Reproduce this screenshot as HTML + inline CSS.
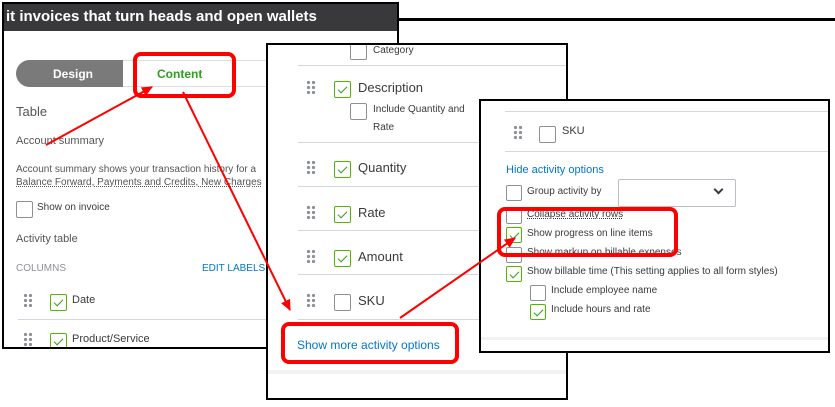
<!DOCTYPE html>
<html><head><style>
*{margin:0;padding:0;box-sizing:border-box}
body{width:835px;height:407px;background:#fff;position:relative;overflow:hidden;font-family:"Liberation Sans",sans-serif;color:#393a3d}
.abs{position:absolute}
.p{position:absolute;background:#fff;border:2px solid #000;overflow:hidden}
.t{position:absolute;white-space:nowrap}
.cb{position:absolute;width:17px;height:17px;border:1px solid #8d9096;border-radius:2px;background:#fff}
.cb.on{border-color:#53b700}
.cb.on::after{content:"";position:absolute;left:5px;top:2px;width:4px;height:8px;border:solid #2ca01c;border-width:0 1.5px 1.5px 0;transform:rotate(45deg)}
.dr{position:absolute;width:10px;height:14px;background:radial-gradient(circle,#8d9096 1.6px,transparent 1.8px) 0 0/5px 5px}
.sep{position:absolute;height:1px;background:#d4d7dc}
.red{position:absolute;border:4px solid #f00;border-radius:8px}
</style></head><body>
<div class="abs" style="left:398px;top:18px;width:437px;height:3px;background:#000"></div>

<div class="p" style="left:2px;top:2px;width:397px;height:347px">
 <div class="abs" style="left:0;top:0;width:400px;height:27px;background:#39393b"></div>
 <div class="t" style="left:2px;top:4px;color:#fff;font-size:15px;font-weight:bold">it invoices that turn heads and open wallets</div>
 <div class="abs" style="left:12px;top:56px;width:110px;height:27px;background:#7a7a7a;border-radius:14px 0 0 14px"></div>
 <div class="t" style="left:49px;top:63px;color:#fff;font-size:12px;font-weight:bold">Design</div>
 <div class="abs" style="left:119px;top:56px;width:150px;height:27px;background:#fff;border-top:1px solid #ddd;border-bottom:1px solid #ddd"></div>
 <div class="abs" style="left:262px;top:56px;width:20px;height:27px;background:#888"></div>
 <div class="t" style="left:153px;top:63px;color:#2ca01c;font-size:12px;font-weight:bold">Content</div>
 <div class="t" style="left:12px;top:100px;font-size:13px;color:#555">Table</div>
 <div class="t" style="left:12px;top:131px;font-size:11px;color:#555">Account summary</div>
 <div class="t" style="left:12px;top:160px;font-size:10px;color:#555">Account summary shows your transaction history for a</div>
 <div class="t" style="left:12px;top:173px;font-size:10px;color:#555;text-decoration:underline dotted">Balance Forward, Payments and Credits, New Charges</div>
 <div class="cb" style="left:12px;top:197px"></div>
 <div class="t" style="left:33px;top:198px;font-size:10px">Show on invoice</div>
 <div class="t" style="left:12px;top:229px;font-size:11px;color:#555">Activity table</div>
 <div class="t" style="left:12px;top:259px;font-size:10px;color:#8d9096">COLUMNS</div>
 <div class="t" style="left:198px;top:259px;font-size:10px;color:#0077c5">EDIT LABELS</div>
 <div class="dr" style="left:19px;top:289px"></div>
 <div class="cb on" style="left:46px;top:290px"></div>
 <div class="t" style="left:68px;top:290px;font-size:11px">Date</div>
 <div class="sep" style="left:14px;top:315px;width:380px"></div>
 <div class="dr" style="left:19px;top:328px"></div>
 <div class="cb on" style="left:46px;top:329px"></div>
 <div class="t" style="left:68px;top:329px;font-size:11px">Product/Service</div>
</div>

<div class="p" style="left:266px;top:43px;width:302px;height:357px">
 <div class="cb" style="left:82px;top:-2px"></div>
 <div class="t" style="left:105px;top:0px;font-size:10px">Category</div>
 <div class="sep" style="left:30px;top:20px;width:272px"></div>
 <div class="dr" style="left:38px;top:35px"></div>
 <div class="cb on" style="left:66px;top:36px"></div>
 <div class="t" style="left:90px;top:35px;font-size:13px">Description</div>
 <div class="cb" style="left:82px;top:58px"></div>
 <div class="t" style="left:105px;top:59px;font-size:10px">Include Quantity and</div>
 <div class="t" style="left:105px;top:77px;font-size:10px">Rate</div>
 <div class="sep" style="left:30px;top:97px;width:272px"></div>
 <div class="dr" style="left:38px;top:115px"></div>
 <div class="cb on" style="left:66px;top:116px"></div>
 <div class="t" style="left:90px;top:115px;font-size:13px">Quantity</div>
 <div class="sep" style="left:30px;top:141px;width:272px"></div>
 <div class="dr" style="left:38px;top:160px"></div>
 <div class="cb on" style="left:66px;top:161px"></div>
 <div class="t" style="left:90px;top:160px;font-size:13px">Rate</div>
 <div class="sep" style="left:30px;top:185px;width:272px"></div>
 <div class="dr" style="left:38px;top:204px"></div>
 <div class="cb on" style="left:66px;top:205px"></div>
 <div class="t" style="left:90px;top:204px;font-size:13px">Amount</div>
 <div class="sep" style="left:30px;top:229px;width:272px"></div>
 <div class="dr" style="left:38px;top:248px"></div>
 <div class="cb" style="left:66px;top:249px"></div>
 <div class="t" style="left:90px;top:248px;font-size:13px">SKU</div>
 <div class="sep" style="left:30px;top:274px;width:272px"></div>
 <div class="t" style="left:29px;top:293px;font-size:12px;color:#0077c5">Show more activity options</div>
 <div class="abs" style="left:0;top:325px;width:302px;height:4px;background:#f1f2f4"></div>
</div>

<div class="p" style="left:479px;top:99px;width:351px;height:254px">
 <div class="sep" style="left:24px;top:10px;width:330px"></div>
 <div class="dr" style="left:32px;top:24px"></div>
 <div class="cb" style="left:58px;top:25px"></div>
 <div class="t" style="left:81px;top:24px;font-size:11px">SKU</div>
 <div class="sep" style="left:24px;top:50px;width:330px"></div>
 <div class="t" style="left:25px;top:63px;font-size:11px;color:#0077c5">Hide activity options</div>
 <div class="cb" style="left:25px;top:84px;width:16px;height:16px"></div>
 <div class="t" style="left:46px;top:85px;font-size:10px">Group activity by</div>
 <div class="abs" style="left:137px;top:78px;width:118px;height:28px;border:1px solid #babec5;border-radius:2px"></div>
 <div class="abs" style="left:234px;top:85px;width:7px;height:7px;border:solid #393a3d;border-width:0 2px 2px 0;transform:rotate(45deg)"></div>
 <div class="cb" style="left:25px;top:107px;width:16px;height:16px"></div>
 <div class="t" style="left:46px;top:108px;font-size:10px;text-decoration:underline dotted">Collapse activity rows</div>
 <div class="cb on" style="left:25px;top:126px;width:16px;height:16px"></div>
 <div class="t" style="left:46px;top:127px;font-size:10px">Show progress on line items</div>
 <div class="cb" style="left:25px;top:146px;width:16px;height:16px"></div>
 <div class="t" style="left:46px;top:146px;font-size:10px">Show markup on billable expenses</div>
 <div class="cb on" style="left:25px;top:165px;width:16px;height:16px"></div>
 <div class="t" style="left:46px;top:165px;font-size:10px">Show billable time (This setting applies to all form styles)</div>
 <div class="cb" style="left:49px;top:184px;width:16px;height:16px"></div>
 <div class="t" style="left:70px;top:184px;font-size:10px">Include employee name</div>
 <div class="cb on" style="left:49px;top:203px;width:16px;height:16px"></div>
 <div class="t" style="left:70px;top:203px;font-size:10px">Include hours and rate</div>
 <div class="abs" style="left:0;top:236px;width:351px;height:3px;background:#f1f2f4"></div>
</div>

<div class="red" style="left:133px;top:52px;width:103px;height:46px"></div>
<div class="red" style="left:281px;top:322px;width:178px;height:42px"></div>
<div class="red" style="left:497px;top:207px;width:181px;height:50px"></div>

<svg class="abs" style="left:0;top:0" width="835" height="407">
 <defs><marker id="a" markerWidth="11" markerHeight="10" refX="10" refY="5" orient="auto" markerUnits="userSpaceOnUse"><path d="M0,0 L11,5 L0,10 Z" fill="#f00"/></marker></defs>
 <g stroke="#f00" stroke-width="2" fill="none">
  <line x1="46" y1="145" x2="152" y2="87" marker-end="url(#a)"/>
  <line x1="183" y1="92" x2="290" y2="310" marker-end="url(#a)"/>
  <line x1="400" y1="318" x2="515" y2="238" marker-end="url(#a)"/>
 </g>
</svg>
</body></html>
